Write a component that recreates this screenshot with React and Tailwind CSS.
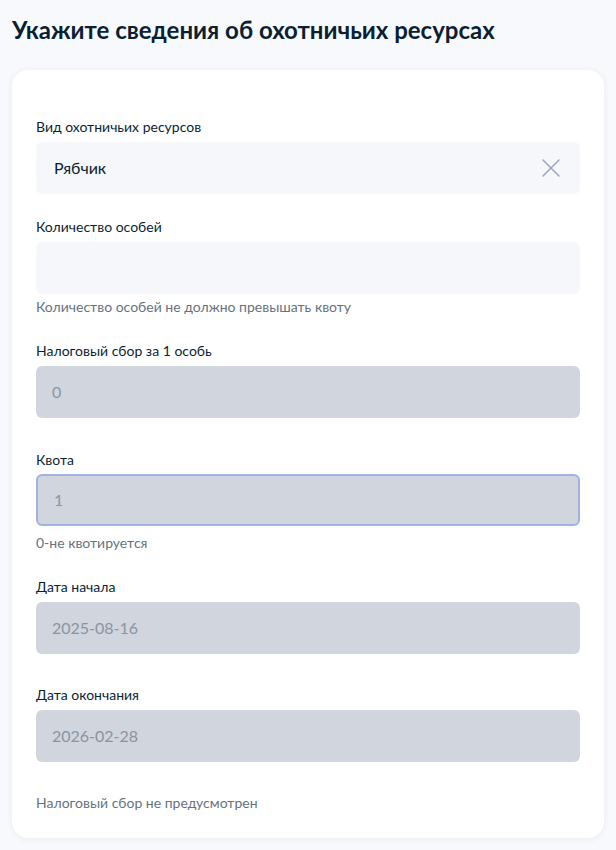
import React from "react";

function Label({ children, className = "" }) {
  return (
    <div className={`text-[14px] leading-[20px] text-[#0b1f33] ${className}`}>{children}</div>
  );
}

function Hint({ children, className = "" }) {
  return (
    <div className={`text-[14px] leading-[20px] text-[#66727f] ${className}`}>{children}</div>
  );
}

function Disabled({ value, focused = false }) {
  return (
    <div
      className={`h-[52px] rounded-[6px] bg-[#d0d5de] flex items-center px-[16px] text-[16px] text-[#8a94a2] ${
        focused ? "border-2 border-[#a3b1e0] px-[14px]" : ""
      }`}
    >
      {value}
    </div>
  );
}

export default function App() {
  return (
    <div
      className="min-h-[850px] bg-[#f8f9fc] px-[12px] pt-[14px] pb-[12px]"
      style={{ fontFamily: "Lato, 'Noto Sans', sans-serif" }}
    >
      <h1 className="text-[24px] leading-[32px] font-bold text-[#0b1f33]">
        Укажите сведения об охотничьих ресурсах
      </h1>
      <div className="mt-[24px] bg-white rounded-[16px] shadow-[0_1px_6px_rgba(40,60,100,0.07)] px-[24px] pt-[47px] pb-[25px]">
        <Label>Вид охотничьих ресурсов</Label>
        <div className="mt-[5px] h-[52px] rounded-[6px] bg-[#f5f7fa] flex items-center justify-between pl-[18px] pr-[19px]">
          <span className="text-[16px] text-[#0b1f33]">Рябчик</span>
          <svg width="20" height="20" viewBox="0 0 20 20" fill="none">
            <path d="M2 2L18 18M18 2L2 18" stroke="#9ba6b9" strokeWidth="1.5" strokeLinecap="round" />
          </svg>
        </div>

        <Label className="mt-[23px]">Количество особей</Label>
        <div className="mt-[5px] h-[52px] rounded-[6px] bg-[#f5f7fa]" />
        <Hint className="mt-[3px]">Количество особей не должно превышать квоту</Hint>

        <Label className="mt-[24px]">Налоговый сбор за 1 особь</Label>
        <div className="mt-[5px]">
          <Disabled value="0" />
        </div>

        <Label className="mt-[32px]">Квота</Label>
        <div className="mt-[4px]">
          <Disabled value="1" focused />
        </div>
        <Hint className="mt-[7px]">0-не квотируется</Hint>

        <Label className="mt-[24px]">Дата начала</Label>
        <div className="mt-[5px]">
          <Disabled value="2025-08-16" />
        </div>

        <Label className="mt-[31px]">Дата окончания</Label>
        <div className="mt-[5px]">
          <Disabled value="2026-02-28" />
        </div>

        <Hint className="mt-[31px]">Налоговый сбор не предусмотрен</Hint>
      </div>
    </div>
  );
}
